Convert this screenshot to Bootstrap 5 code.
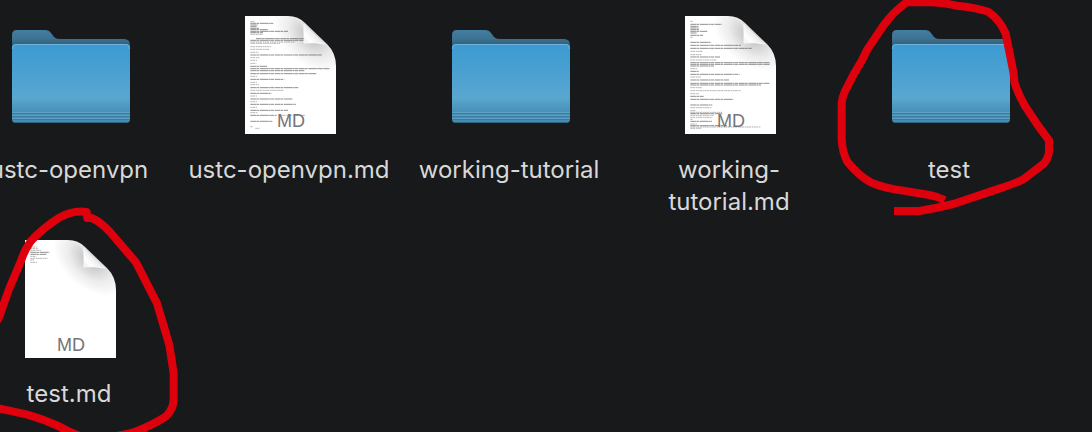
<!DOCTYPE html>
<html lang="en">
<head>
<meta charset="utf-8">
<meta name="viewport" content="width=device-width, initial-scale=1">
<title>Files</title>
<link href="https://cdn.jsdelivr.net/npm/bootstrap@5.3.0/dist/css/bootstrap.min.css" rel="stylesheet">
<style>
  body { background: #18191a; color: #d8d8d8; font-family: Inter, "Liberation Sans", sans-serif; }
  .desk { height: 100vh; }
  .file-grid { display: grid; grid-template-columns: repeat(auto-fill, 220px); row-gap: 17px; margin: 11px 0 0 -40px; }
  .file-icon { width: 128px; height: 128px; margin-bottom: 15px; margin-left: 2px; }
  .file-name { font-size: 24px; line-height: 32px; font-weight: 400; padding-right: 2px; }
  .marker { overflow: visible; pointer-events: none; width: 220px; height: 208px; }
  .marker path { fill: none; stroke: #df000d; stroke-width: 24; stroke-linejoin: round; }
  .kind { font: 18px "Liberation Sans", Arial, sans-serif; fill: #757575; }
  .print { fill: none; stroke: #444; stroke-width: 3; stroke-dasharray: 17 1 8 2 25 1 5 1 11 2; opacity: .6; }
  .print-light { stroke-dasharray: 5 1 9 2 3 1; opacity: .4; }
</style>
</head>
<body>
<svg width="0" height="0" class="position-absolute" aria-hidden="true">
  <defs>
    <linearGradient id="front" x2="0" y2="1">
      <stop offset="0" stop-color="#3c9bd3"/><stop offset=".3" stop-color="#489fd0"/>
      <stop offset=".68" stop-color="#59a7d0"/><stop offset=".86" stop-color="#4890b8"/><stop offset="1" stop-color="#4489af"/>
    </linearGradient>
    <linearGradient id="back" gradientUnits="userSpaceOnUse" x1="0" y1="19" x2="0" y2="36">
      <stop offset="0" stop-color="#437ea2"/><stop offset=".5" stop-color="#3d7393"/><stop offset="1" stop-color="#2f566e"/>
    </linearGradient>
    <radialGradient id="shade" gradientUnits="userSpaceOnUse" cx="0" cy="0" r="1" gradientTransform="translate(84 25) rotate(42) scale(44 28)">
      <stop offset="0" stop-color="#bdbdbd"/><stop offset=".25" stop-color="#cfcfcf"/><stop offset=".6" stop-color="#ececec"/><stop offset="1" stop-color="#fff"/>
    </radialGradient>
    <linearGradient id="curl" gradientUnits="userSpaceOnUse" x1="76" y1="33" x2="90" y2="21">
      <stop offset="0" stop-color="#e4e4e4"/><stop offset=".4" stop-color="#fff"/><stop offset="1" stop-color="#e2e2e2"/>
    </linearGradient>
    <symbol id="folder" viewBox="0 0 128 128">
      <path d="M5 36V24q0-5 5-5h28q4 0 6 3l3 4q2 2 5 2h65q6 0 6 6v10H5z" fill="url(#back)"/>
      <path d="M5 37q0-4 4-4h110q4 0 4 4v71q0 4-4 4H9q-4 0-4-4z" fill="url(#front)"/>
      <path d="M5.500 38q0-4.500 4-4.500h109q4 0 4 4.500" fill="none" stroke="#72b5dc"/>
      <path d="M5 101.500h118M5 104.500h118M5 107.500h118" stroke="#65a8cc" opacity=".7"/>
      <path d="M5 102.500h118M5 105.500h118M5 108.500h118" stroke="#347597" opacity=".65"/>
      <path d="M7 111.500h114" stroke="#2d6582"/>
    </symbol>
    <symbol id="sheet" viewBox="0 0 128 128">
      <path d="M18 5h43q10 0 17 7l22 21q9 9 9 22v68H18z" fill="url(#shade)"/>
    </symbol>
    <symbol id="corner" viewBox="0 0 128 128">
      <path d="M61 5q10 0 17 7l20 20q-8-2-21-1 1-16-7-23-4-3-9-3z" fill="#fff" opacity=".25"/>
      <path d="M77 13l21 20q-9-2-21-1z" fill="url(#curl)"/>
      <path d="M77 13v19q12-1 21 1" fill="none" stroke="#fff" opacity=".8"/>
    </symbol>
  </defs>
</svg>

<main class="desk overflow-hidden">
  <ul class="file-grid list-unstyled">
    <li class="d-flex flex-column align-items-center text-center">
      <svg class="file-icon" aria-hidden="true"><use href="#folder"/></svg>
      <span class="file-name">ustc-openvpn</span>
    </li>
    <li class="d-flex flex-column align-items-center text-center">
      <svg class="file-icon" viewBox="0 0 128 128" aria-hidden="true">
        <use href="#sheet"/>
        <g transform="translate(-47 -6) scale(.33333)">
          <path class="print" d="M211 55h69M211 60h22M211 65h20M211 70h26M211 74h52M211 79h113M211 83h38M228 101h144M211 106h160M211 150h214M211 184h50M211 191h238M211 197h162M211 206h198M211 223h102M211 248h144M211 265h63M211 282h127M211 298h137M211 316h113M211 331h79M211 349h66"/>
          <path class="print print-light" d="M211 50h12M211 88h38M211 111h134M211 115h90M211 125h62M211 133h56M211 142h24M211 158h28M211 166h20M211 175h18M211 214h20M211 232h20M211 239h26M211 256h99M211 273h20M211 290h20M211 307h20M211 323h22M300 331h75M211 365h8M226 370h12"/>
        </g>
        <use href="#corner"/>
        <text class="kind" x="64" y="116" text-anchor="middle">MD</text>
      </svg>
      <span class="file-name">ustc-openvpn.md</span>
    </li>
    <li class="d-flex flex-column align-items-center text-center">
      <svg class="file-icon" aria-hidden="true"><use href="#folder"/></svg>
      <span class="file-name">working-tutorial</span>
    </li>
    <li class="d-flex flex-column align-items-center text-center">
      <svg class="file-icon" viewBox="0 0 128 128" aria-hidden="true">
        <use href="#sheet"/>
        <g transform="translate(-7 -6) scale(.33333)">
          <path class="print" d="M91 58h94M91 64h24M91 69h25M91 74h28M91 79h51M91 84h20M91 91h38M91 112h62M91 121h152M91 130h184M91 156h89M91 173h239M91 178h239M91 183h72M91 199h25M91 208h148M91 225h116M91 235h238M91 240h212M91 274h40M91 283h129M91 300h66M91 326h96M91 349h65M91 362h110"/>
          <path class="print print-light" d="M91 49h8M91 97h8M91 139h38M91 149h33M91 165h80M91 191h20M91 216h32M91 248h34M91 257h151M91 266h27M91 308h64M91 317h15M91 322h95M91 331h71M91 337h66M91 343h8M91 357h20M91 366h211M91 370h33"/>
        </g>
        <use href="#corner"/>
        <text class="kind" x="64" y="116" text-anchor="middle">MD</text>
      </svg>
      <span class="file-name">working-tutorial.md</span>
    </li>
    <li class="d-flex flex-column align-items-center text-center position-relative">
      <svg class="file-icon" aria-hidden="true"><use href="#folder"/></svg>
      <span class="file-name">test</span>
      <svg class="marker position-absolute top-0 start-0" aria-hidden="true">
        <g transform="translate(-10 -11) scale(.33333)">
          <path d="M344 601Q322 589 298 585L195 568Q148 559 122 547Q85 526 52 485Q38 459 35 420V310Q36 292 45 274L70 225L96 181L111 150L158 80Q189 36 230 7H300L340 9L380 17Q437 22 474 35Q509 58 527 101L538 155L550 215L554 249Q563 279 585 318L625 378L657 421V455Q655 477 640 492L580 538Q556 550 510 565L370 612Q315 625 269 633H192"/>
        </g>
      </svg>
    </li>
    <li class="d-flex flex-column align-items-center text-center position-relative">
      <svg class="file-icon" viewBox="0 0 128 128" aria-hidden="true">
        <use href="#sheet"/>
        <g transform="translate(-7 -35) scale(.33333)">
          <path class="print" d="M91 157h57M91 163h48"/>
          <path class="print print-light" d="M91 141h22M91 146h24M91 151h32M91 169h18M91 175h52M91 180h11M91 187h21"/>
        </g>
        <use href="#corner"/>
        <text class="kind" x="64" y="116" text-anchor="middle">MD</text>
      </svg>
      <span class="file-name">test.md</span>
      <svg class="marker position-absolute top-0 start-0" aria-hidden="true">
        <g transform="translate(40 -35) scale(.33333)">
          <path d="M-15 375L0 344L26 270L64 180Q72 154 92 124Q130 83 178 53Q219 29 260 36L262 54H275Q301 65 330 96L408 187L471 310L508 435L521 520V600Q519 629 497 650Q458 676 405 695Q340 718 240 708Q206 696 175 678Q130 658 82 644L0 626L-25 620"/>
        </g>
      </svg>
    </li>
  </ul>
</main>
<script src="https://cdn.jsdelivr.net/npm/bootstrap@5.3.0/dist/js/bootstrap.bundle.min.js"></script>
</body>
</html>
